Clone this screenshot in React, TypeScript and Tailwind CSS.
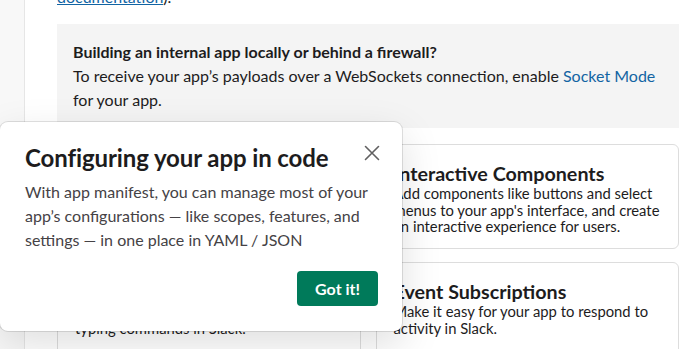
import React from "react";

const cards = [
  {
    title: "Incoming Webhooks",
    desc: "Post messages from external sources into Slack.",
  },
  {
    title: "Interactive Components",
    desc: "Add components like buttons and select menus to your app's interface, and create an interactive experience for users.",
  },
  {
    title: "Slash Commands",
    desc: "Allow users to perform app actions by typing commands in Slack.",
  },
  {
    title: "Event Subscriptions",
    desc: "Make it easy for your app to respond to activity in Slack.",
  },
];

function CloseIcon() {
  return (
    <svg width="16" height="16" viewBox="0 0 16 16" fill="none">
      <path
        d="M1.5 1.5l13 13M14.5 1.5l-13 13"
        stroke="#616061"
        strokeWidth="1.6"
        strokeLinecap="round"
      />
    </svg>
  );
}

export default function App() {
  return (
    <div
      className="relative flex h-[349px] w-full overflow-hidden bg-white text-[#1d1c1d]"
      style={{ fontFamily: "Lato, 'Noto Sans', sans-serif" }}
    >
      {/* sidebar */}
      <div className="w-[25px] shrink-0 border-r border-[#e6e6e6] bg-[#f8f8f8]" />

      {/* main */}
      <div className="flex-1 pl-[32px] pr-[20px]">
        <p className="-mt-[15px] text-[16px] leading-6">
          <a className="text-[#1264a3] underline">documentation</a>).
        </p>

        <div className="mt-[15px] bg-[#f4f4f4] px-4 py-4 text-[16px] leading-6">
          <p className="font-bold">
            Building an internal app locally or behind a firewall?
          </p>
          <p>
            To receive your app&rsquo;s payloads over a WebSockets connection,
            enable <a className="text-[#1264a3]">Socket Mode</a> for your app.
          </p>
        </div>

        <div className="mt-4 grid grid-cols-2 gap-x-[15px] gap-y-[13px]">
          {cards.map((c) => (
            <div
              key={c.title}
              className="h-[105px] rounded-md border border-[#dddddd] pl-[17px] pr-[12px] pt-[18px]"
            >
              <h3 className="text-[19.7px] font-bold leading-[22px]">{c.title}</h3>
              <p className="text-[14.8px] leading-[16.5px]">{c.desc}</p>
            </div>
          ))}
        </div>
      </div>

      {/* popover */}
      <div className="absolute left-0 top-[122px] w-[402px] rounded-lg bg-white px-[25px] pt-[19px] pb-[25px] shadow-[0_0_0_1px_rgba(29,28,29,0.13),0_14px_40px_0_rgba(0,0,0,0.13)]">
        <div className="flex items-start justify-between">
          <h2 className="text-[24px] font-bold leading-[34px] tracking-[-0.1px]">
            Configuring your app in code
          </h2>
          <button className="mt-[4px] -mr-[3px]">
            <CloseIcon />
          </button>
        </div>
        <p className="mt-[5px] text-[16px] leading-6 text-[#454245]">
          With app manifest, you can manage most of your app&rsquo;s
          configurations &mdash; like scopes, features, and settings &mdash; in
          one place in YAML / JSON
        </p>
        <div className="mt-[19px] flex justify-end">
          <button className="mr-[-1px] h-[35px] rounded-[4px] bg-[#007a5a] px-[18px] text-[16px] font-bold text-white">
            Got it!
          </button>
        </div>
      </div>
    </div>
  );
}
